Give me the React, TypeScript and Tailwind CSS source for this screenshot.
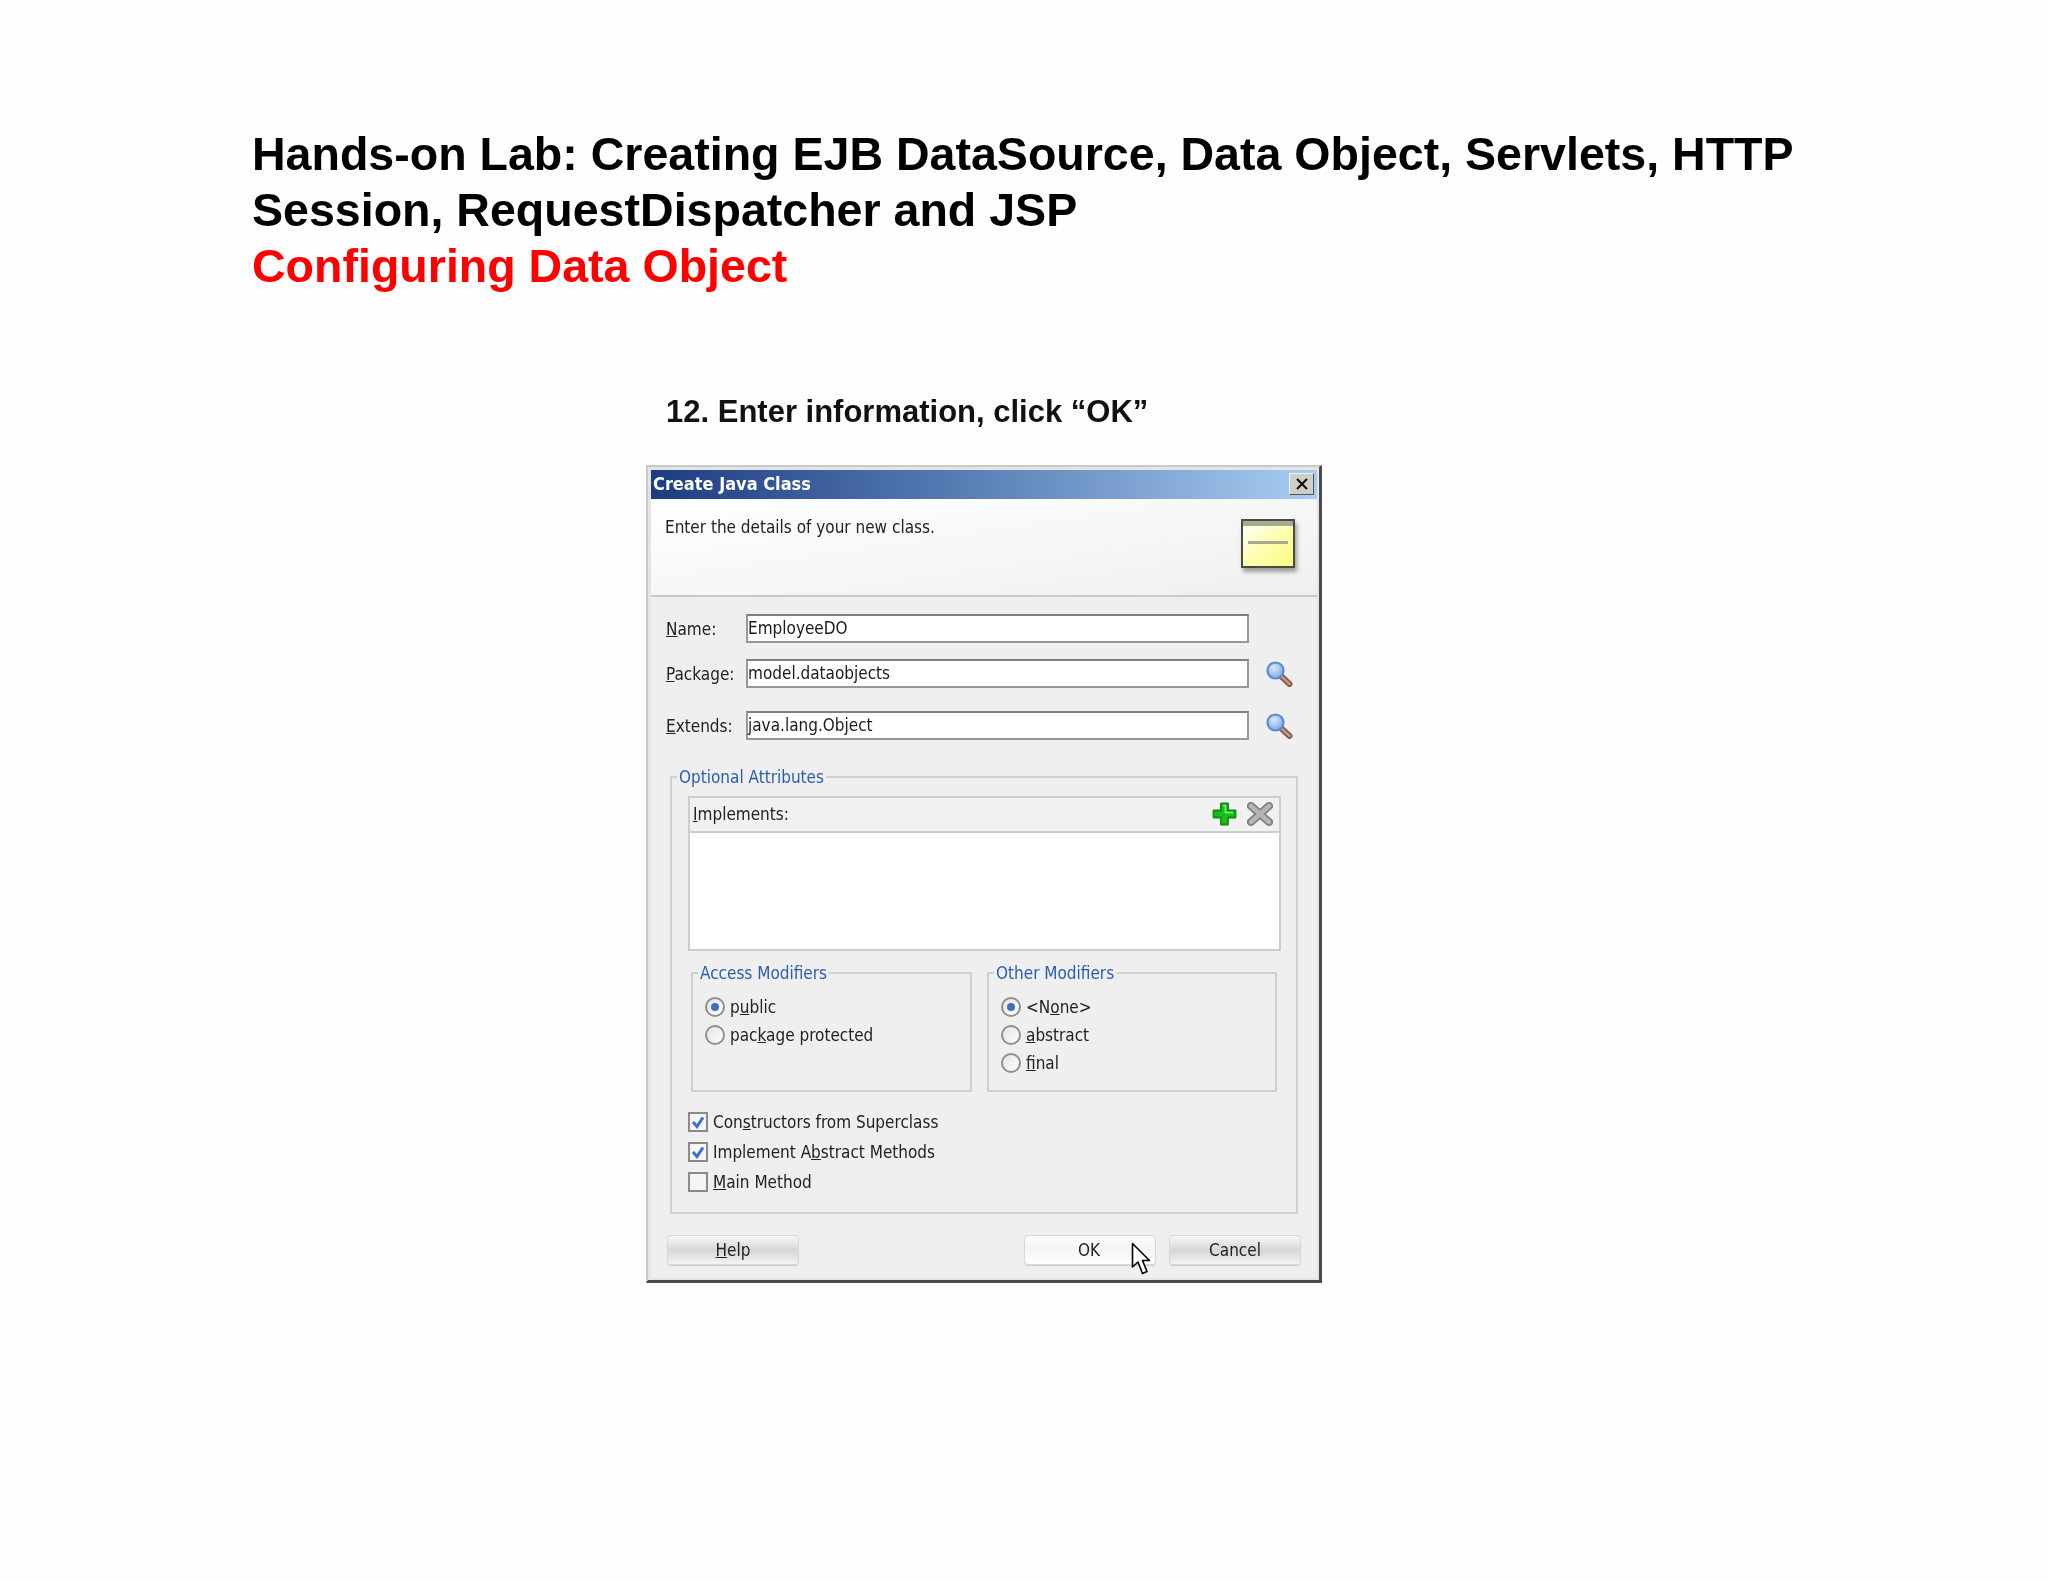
import React from 'react';

const uiFont = "font-['DejaVu_Sans_Condensed','DejaVu_Sans',sans-serif]";

function Magnifier() {
  return (
    <svg width="27" height="26" viewBox="0 0 27 26">
      <defs>
        <radialGradient id="lens" cx="0.4" cy="0.35" r="0.7">
          <stop offset="0" stopColor="#dbe9fb" />
          <stop offset="1" stopColor="#7aa6e4" />
        </radialGradient>
      </defs>
      <path d="M15.500 15.500 L23.500 23" stroke="#8a5f4c" strokeWidth="6" strokeLinecap="round" />
      <path d="M15.500 15.500 L23.500 23" stroke="#c9a18c" strokeWidth="2" strokeLinecap="round" />
      <circle cx="9.500" cy="9.500" r="8" fill="url(#lens)" stroke="#5c8bd0" strokeWidth="2.200" />
    </svg>
  );
}

function PlusIcon() {
  return (
    <svg width="25" height="24" viewBox="0 0 25 24">
      <path d="M9 1.500h7v7h7.500v7H16v7H9v-7H1.500v-7H9z" fill="#18c018" stroke="#0e8a16" strokeWidth="1.800" strokeLinejoin="round" />
      <path d="M11 3.500h2.500v7H21" fill="none" stroke="#7cf07c" strokeWidth="1.500" />
    </svg>
  );
}

function RemoveIcon() {
  return (
    <svg width="26" height="24" viewBox="0 0 26 24">
      <path d="M4 4 L22 20 M22 4 L4 20" stroke="#7f7f7f" strokeWidth="8" strokeLinecap="round" />
      <path d="M4 4 L22 20 M22 4 L4 20" stroke="#b5b5b5" strokeWidth="4.500" strokeLinecap="round" />
    </svg>
  );
}

function Cursor() {
  return (
    <svg width="20" height="34" viewBox="0 0 20 34">
      <path d="M1.500 1.500 L1.500 25 L7 20 L11.500 31.500 L16 29.500 L11.500 18.500 L18.500 18.500 Z" fill="#fff" stroke="#000" strokeWidth="1.600" strokeLinejoin="round" />
    </svg>
  );
}

function TextField({ value }: { value: string }) {
  return (
    <div className="w-[503px] h-[29px] bg-white border-2 border-[#989898] border-t-[#7e7e7e] flex items-center pb-px text-[#1a1a1a]">
      {value}
    </div>
  );
}

function Radio({ checked, children }: { checked?: boolean; children: React.ReactNode }) {
  return (
    <div className="flex items-center gap-[5px] h-[28px]">
      <div className="w-[20px] h-[20px] rounded-full border-2 border-[#8f8f8f] bg-gradient-to-br from-[#e4e4e4] to-white flex items-center justify-center">
        {checked && <div className="w-[8px] h-[8px] rounded-full bg-[#3f6fc4]" />}
      </div>
      <span>{children}</span>
    </div>
  );
}

function CheckRow({ checked, children }: { checked?: boolean; children: React.ReactNode }) {
  return (
    <div className="flex items-center gap-[5px] h-[30px]">
      <div className="w-[20px] h-[20px] border-2 border-[#8a8a8a] bg-[#f5f5f5] flex items-center justify-center">
        {checked && (
          <svg width="14" height="14" viewBox="0 0 14 14">
            <path d="M2 7 L6 11.500 L12 2.500" fill="none" stroke="#3a6fd0" strokeWidth="3" />
          </svg>
        )}
      </div>
      <span>{children}</span>
    </div>
  );
}

function DialogButton({ primary, className, children }: { primary?: boolean; className?: string; children: React.ReactNode }) {
  return (
    <div
      className={`relative w-[132px] h-[30px] rounded-[4px] border border-[#d8d8d8] shadow-[0_1px_1px_rgba(0,0,0,0.15)] flex items-center justify-center pb-px bg-gradient-to-b ${
        primary ? 'from-[#fbfbfb] via-[#f4f4f4] to-[#ffffff]' : 'from-[#f8f8f8] via-[#d6d6d6] to-[#f4f4f4]'
      } ${className ?? ''}`}
    >
      {children}
    </div>
  );
}

export default function App() {
  return (
    <div className="w-[2048px] h-[1582px] bg-[#fefefe] pl-[252px] pt-[126px] font-['Liberation_Sans',Arial,sans-serif]">
      <h1 className="text-[46.55px] leading-[56px] font-bold text-black w-[1600px] blur-[0.3px]">
        Hands-on Lab: Creating EJB DataSource, Data Object, Servlets, HTTP
        <br />
        Session, RequestDispatcher and JSP
        <br />
        <span className="text-[#ff0000]">Configuring Data Object</span>
      </h1>
      <p className="mt-[98px] ml-[414px] text-[31px] leading-[40px] font-bold text-[#111] blur-[0.3px]">
        12. Enter information, click “OK”
      </p>

      <div className={`mt-[33px] ml-[394px] w-[676px] h-[818px] bg-[#e4e4e4] border-2 border-[#c9c9c9] border-r-[3px] border-r-[#4c4c4c] border-b-[3px] border-b-[#4c4c4c] p-[3px] pr-[2px] text-[17px] leading-[20px] text-[#222] blur-[0.4px] ${uiFont}`}>
        <div className="w-[666px] h-[808px] bg-[#efeff0]">
          <div className="h-[29px] flex items-center justify-between pl-[2px] pr-[3px] pb-px bg-gradient-to-r from-[#1e3c80] via-[#5c82b8] to-[#a9cdf2]">
            <span className="text-white font-bold text-[18px]">Create Java Class</span>
            <div className="w-[25px] h-[22px] bg-[#d0cec8] border border-[#f4f4f4] border-r-[#555] border-b-[#555] flex items-center justify-center">
              <svg width="14" height="14" viewBox="0 0 14 14">
                <path d="M2 2 L12 12 M12 2 L2 12" stroke="#111" strokeWidth="2.200" />
              </svg>
            </div>
          </div>

          <div className="h-[98px] border-b-2 border-[#c9c9c9] flex justify-between items-start pl-[14px] pr-[22px] bg-gradient-to-br from-white to-[#efeff0]">
            <span className="mt-[18px]">Enter the details of your new class.</span>
            <div className="mt-[20px] w-[54px] h-[49px] border-2 border-[#4a4a42] bg-gradient-to-br from-white via-[#fdfdb0] to-[#fbfb80] shadow-[2px_4px_4px_rgba(0,0,0,0.35)]">
              <div className="h-[5px] bg-[#a9a98f]" />
              <div className="mt-[15px] mx-[5px] h-[3px] bg-[#a9a98f]" />
            </div>
          </div>

          <div className="pl-[15px]">
            <div className="pt-[17px] flex items-center">
              <span className="w-[80px]"><u>N</u>ame:</span>
              <TextField value="EmployeeDO" />
            </div>
            <div className="mt-[16px] flex items-center">
              <span className="w-[80px]"><u>P</u>ackage:</span>
              <TextField value="model.dataobjects" />
              <div className="ml-[17px]"><Magnifier /></div>
            </div>
            <div className="mt-[23px] flex items-center">
              <span className="w-[80px]"><u>E</u>xtends:</span>
              <TextField value="java.lang.Object" />
              <div className="ml-[17px]"><Magnifier /></div>
            </div>

            <fieldset className="mt-[27px] ml-[4px] w-[628px] border-2 border-[#d0d0d0]">
              <legend className="ml-[5px] px-[2px] leading-[20px] text-[#2a5db0]">Optional Attributes</legend>
              <div className="pl-[16px] pb-[15px]">
                <div className="mt-[9px] w-[593px] h-[155px] border-2 border-[#cdcdcd] bg-white">
                  <div className="h-[35px] bg-[#f1f1f1] border-b-2 border-[#cdcdcd] flex items-center justify-between pl-[3px] pr-[6px]">
                    <span className="-mt-[1px]"><u>I</u>mplements:</span>
                    <div className="flex items-center gap-[10px] -mt-[2px]">
                      <PlusIcon />
                      <RemoveIcon />
                    </div>
                  </div>
                </div>

                <div className="mt-[13px] ml-[3px] flex gap-[15px]">
                  <fieldset className="w-[281px] h-[128px] border-2 border-[#d0d0d0]">
                    <legend className="ml-[5px] px-[2px] leading-[18px] text-[#2a5db0]">Access Modifiers</legend>
                    <div className="pl-[12px] pt-[11px]">
                      <Radio checked>p<u>u</u>blic</Radio>
                      <Radio>pac<u>k</u>age protected</Radio>
                    </div>
                  </fieldset>
                  <fieldset className="w-[290px] h-[128px] border-2 border-[#d0d0d0]">
                    <legend className="ml-[5px] px-[2px] leading-[18px] text-[#2a5db0]">Other Modifiers</legend>
                    <div className="pl-[12px] pt-[11px]">
                      <Radio checked>&lt;N<u>o</u>ne&gt;</Radio>
                      <Radio><u>a</u>bstract</Radio>
                      <Radio><u>f</u>inal</Radio>
                    </div>
                  </fieldset>
                </div>

                <div className="mt-[15px]">
                  <CheckRow checked>Con<u>s</u>tructors from Superclass</CheckRow>
                  <CheckRow checked>Implement A<u>b</u>stract Methods</CheckRow>
                  <CheckRow><u>M</u>ain Method</CheckRow>
                </div>
              </div>
            </fieldset>

            <div className="mt-[21px] ml-px flex">
              <DialogButton><span><u>H</u>elp</span></DialogButton>
              <DialogButton primary className="ml-[225px]">
                <span className="-ml-[2px]">OK</span>
                <div className="absolute left-[106px] top-[6px]"><Cursor /></div>
              </DialogButton>
              <DialogButton className="ml-[13px]">Cancel</DialogButton>
            </div>
          </div>
        </div>
      </div>
    </div>
  );
}
